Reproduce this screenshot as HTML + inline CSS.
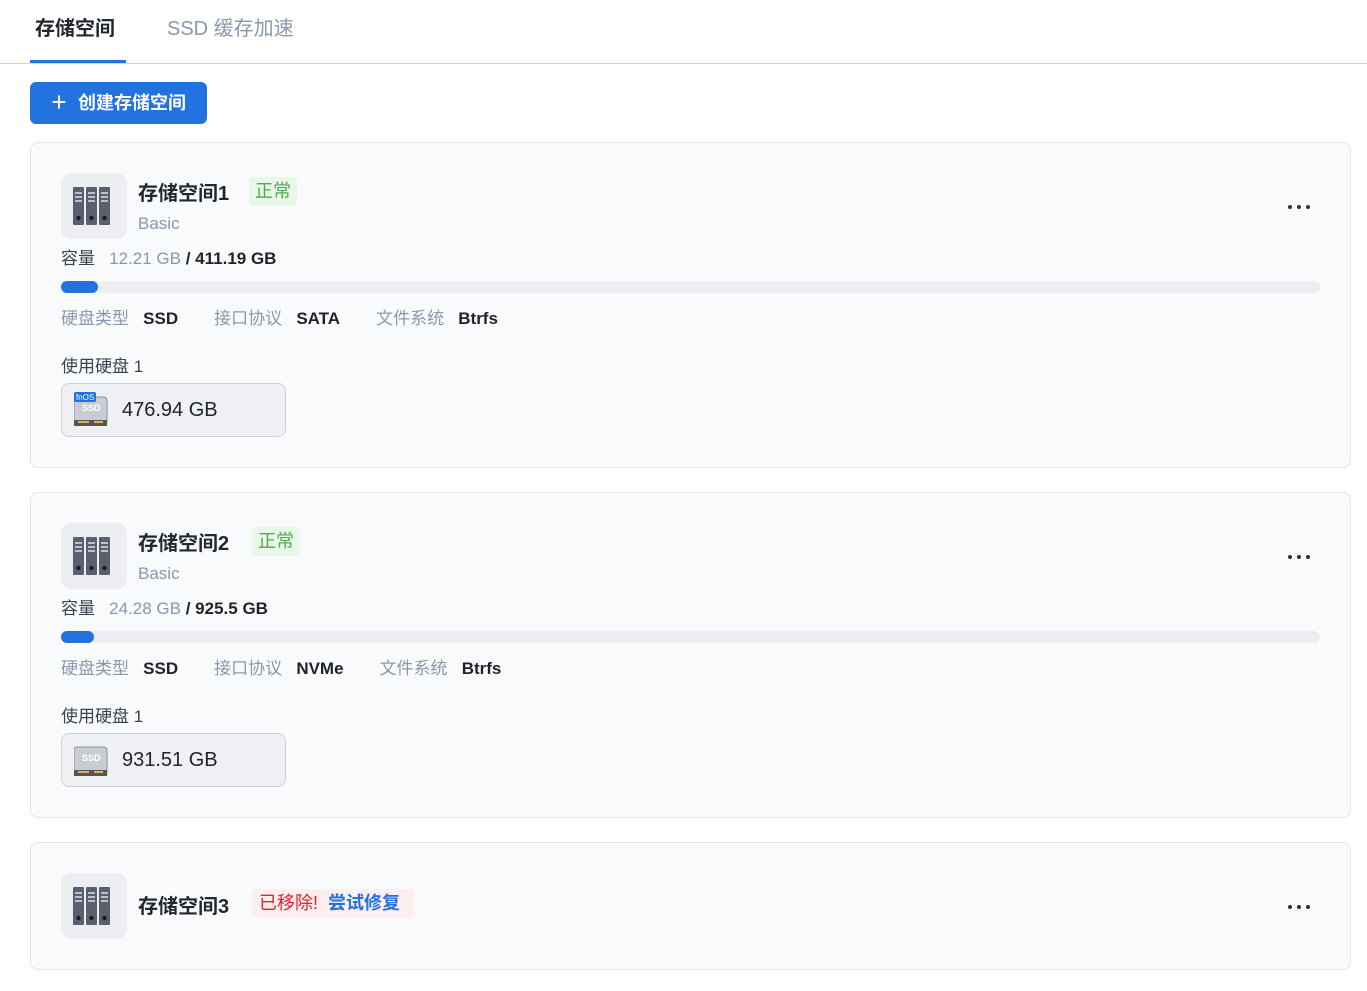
<!DOCTYPE html>
<html><head><meta charset="utf-8"><style>
*{box-sizing:border-box;margin:0;padding:0}
body{width:1367px;height:991px;background:#fff;font-family:"Liberation Sans","Noto Sans CJK SC",sans-serif;position:relative;overflow:hidden;color:#1f2329}
.a{position:absolute;white-space:nowrap}
.card{position:absolute;left:30px;width:1321px;background:#f9fafc;border:1px solid #e2e6ec;border-radius:8px}
.ic{position:absolute;left:30px;top:30px;width:66px;height:66px;background:#eceef2;border-radius:10px}
.t{font-size:20px;font-weight:bold;color:#23272e}
.badge{position:absolute;height:29px;border-radius:4px;font-size:18px;line-height:29px;padding:0 6px}
.g{color:#8a98ad}
.bar{position:absolute;left:30px;width:1259px;height:12px;background:#eceef2;border-radius:6px}
.fill{height:12px;background:#2272e0;border-radius:6px}
.disk{position:absolute;left:30px;width:225px;height:54px;background:#eef0f4;border:1px solid #cdd2da;border-radius:8px}
.dots{position:absolute;left:1257px;width:22px;height:4px}
.dots i{position:absolute;top:0;width:4px;height:4px;border-radius:2px;background:#333}
</style></head><body>
<div class="a" style="left:35px;top:12px;font-size:20px;font-weight:bold;color:#23272e">存储空间</div>
<div class="a" style="left:167px;top:12px;font-size:20px;color:#8a98ad">SSD 缓存加速</div>
<div class="a" style="left:0;top:63px;width:1367px;height:1px;background:#cfd5de"></div>
<div class="a" style="left:30px;top:60px;width:96px;height:3px;background:#2272e0"></div>
<div class="a" style="left:30px;top:82px;width:177px;height:42px;background:#2272e0;border-radius:6px;color:#fff;font-size:18px;font-weight:bold;line-height:42px;padding-left:20px">＋&nbsp; 创建存储空间</div>

<svg width="0" height="0" style="position:absolute"><defs>
<g id="srv"><g fill="#5a5f6d"><rect x="0" y="0" width="11" height="38" rx="1"/><rect x="13" y="0" width="11" height="38" rx="1"/><rect x="26" y="0" width="11" height="38" rx="1"/></g>
<g stroke="#dde0e6" stroke-width="1.5"><path d="M2 6h7M2 10h7M2 14h7M15 6h7M15 10h7M15 14h7M28 6h7M28 10h7M28 14h7"/></g>
<g fill="#1a1d24"><circle cx="5.5" cy="31" r="2.2"/><circle cx="18.5" cy="31" r="2.2"/><circle cx="31.5" cy="31" r="2.2"/></g></g>
<g id="ssd"><rect x="0" y="2" width="33" height="28" rx="3" fill="#c9ccd3" stroke="#8b8f98"/><text x="8" y="16" font-size="9" font-weight="bold" fill="#fff" font-family="Liberation Sans">SSD</text><rect x="0" y="25" width="33" height="6" fill="#555"/><path d="M4 27h11M20 27h9" stroke="#d7b14b" stroke-width="2"/></g>
</defs></svg>

<div class="card" style="top:142px;height:326px">
 <div class="ic"><svg width="66" height="66"><use href="#srv" x="12" y="14"/></svg></div>
 <div class="a t" style="left:107px;top:34px">存储空间1</div>
 <div class="badge" style="left:218px;top:34px;background:#e9f6e9;color:#4cae4c">正常</div>
 <div class="a g" style="left:107px;top:71px;font-size:17px">Basic</div>
 <div class="a" style="left:30px;top:101px;font-size:17px"><span style="color:#3b4250">容量</span>&nbsp;&nbsp; <span class="g">12.21 GB</span> <b>/ 411.19 GB</b></div>
 <div class="dots" style="top:62px"><i style="left:0"></i><i style="left:9px"></i><i style="left:18px"></i></div>
 <div class="bar" style="top:138px"><div class="fill" style="width:37px"></div></div>
 <div class="a" style="left:30px;top:161px;font-size:17px"><span class="g">硬盘类型</span>&nbsp;&nbsp; <b>SSD</b><span style="display:inline-block;width:36px"></span><span class="g">接口协议</span>&nbsp;&nbsp; <b>SATA</b><span style="display:inline-block;width:36px"></span><span class="g">文件系统</span>&nbsp;&nbsp; <b>Btrfs</b></div>
 <div class="a" style="left:30px;top:209px;font-size:17px;color:#3b4250">使用硬盘 1</div>
 <div class="disk" style="top:240px"><svg class="a" style="left:12px;top:8px" width="36" height="36"><use href="#ssd" y="3"/><rect x="0" y="0" width="22" height="10" rx="2" fill="#2272e0"/><text x="2" y="8" font-size="8" fill="#fff" font-family="Liberation Sans">fnOS</text></svg><div class="a" style="left:60px;top:15px;font-size:20px">476.94 GB</div></div>
</div>

<div class="card" style="top:492px;height:326px">
 <div class="ic"><svg width="66" height="66"><use href="#srv" x="12" y="14"/></svg></div>
 <div class="a t" style="left:107px;top:34px">存储空间2</div>
 <div class="badge" style="left:221px;top:34px;background:#e9f6e9;color:#4cae4c">正常</div>
 <div class="a g" style="left:107px;top:71px;font-size:17px">Basic</div>
 <div class="a" style="left:30px;top:101px;font-size:17px"><span style="color:#3b4250">容量</span>&nbsp;&nbsp; <span class="g">24.28 GB</span> <b>/ 925.5 GB</b></div>
 <div class="dots" style="top:62px"><i style="left:0"></i><i style="left:9px"></i><i style="left:18px"></i></div>
 <div class="bar" style="top:138px"><div class="fill" style="width:33px"></div></div>
 <div class="a" style="left:30px;top:161px;font-size:17px"><span class="g">硬盘类型</span>&nbsp;&nbsp; <b>SSD</b><span style="display:inline-block;width:36px"></span><span class="g">接口协议</span>&nbsp;&nbsp; <b>NVMe</b><span style="display:inline-block;width:36px"></span><span class="g">文件系统</span>&nbsp;&nbsp; <b>Btrfs</b></div>
 <div class="a" style="left:30px;top:209px;font-size:17px;color:#3b4250">使用硬盘 1</div>
 <div class="disk" style="top:240px"><svg class="a" style="left:12px;top:8px" width="36" height="36"><use href="#ssd" y="3"/></svg><div class="a" style="left:60px;top:15px;font-size:20px">931.51 GB</div></div>
</div>

<div class="card" style="top:842px;height:128px">
 <div class="ic"><svg width="66" height="66"><use href="#srv" x="12" y="14"/></svg></div>
 <div class="a t" style="left:107px;top:47px">存储空间3</div>
 <div class="badge" style="left:221px;top:46px;background:#fdeef0;color:#e5202e;padding:0 6px 0 7px;width:162px">已移除! &nbsp;<b style="color:#2272e0">尝试修复</b></div>
 <div class="dots" style="top:62px"><i style="left:0"></i><i style="left:9px"></i><i style="left:18px"></i></div>
</div>
</body></html>
